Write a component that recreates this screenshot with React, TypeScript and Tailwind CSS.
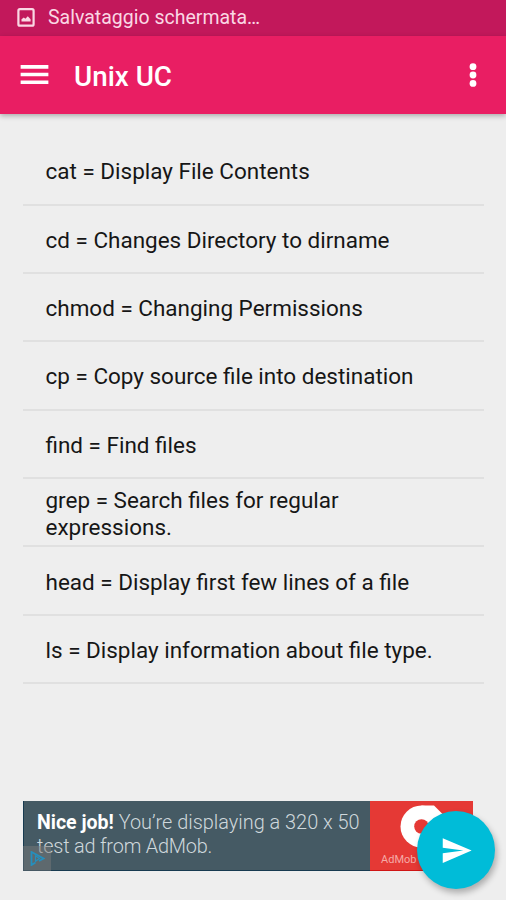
import { useState } from "react";

type Command = {
  name: string;
  description: string;
};

const commands: Command[] = [
  { name: "cat", description: "Display File Contents" },
  { name: "cd", description: "Changes Directory to dirname" },
  { name: "chmod", description: "Changing Permissions" },
  { name: "cp", description: "Copy source file into destination" },
  { name: "find", description: "Find files" },
  { name: "grep", description: "Search files for regular expressions." },
  { name: "head", description: "Display first few lines of a file" },
  { name: "ls", description: "Display information about file type." },
];

function StatusBar() {
  return (
    <div className="flex h-[35.5px] shrink-0 items-start bg-[#c2185b] pl-[17px] text-[#fad7e4]">
      <svg aria-hidden="true" className="mt-2 h-[19px] w-[18px]" viewBox="0 0 18 19">
        <rect fill="none" height="16.5" rx="1.5" stroke="currentColor" strokeWidth="2.2" width="15.2" x="1.4" y="1.2" />
        <path d="M4.5 13.5v-2.3l2.3-1.7 1.6 1.2 2.4-2.4 2.8 3v2.2z" fill="currentColor" />
      </svg>
      <span className="ml-[13px] mt-[5.5px] text-[19.5px] leading-6">Salvataggio schermata…</span>
    </div>
  );
}

function Toolbar() {
  return (
    <header className="z-10 flex h-[78.5px] shrink-0 items-center bg-[#e91e63] text-white shadow-[0_2px_5px_rgba(0,0,0,0.28)]">
      <button aria-label="Open menu" className="ml-4 size-[37px]" type="button">
        <svg className="size-[37px]" fill="currentColor" viewBox="0 0 24 24">
          <path d="M3 18.2h18v-2.3H3v2.3zm0-5h18v-2.3H3v2.3zm0-7.3v2.3h18V5.9H3z" />
        </svg>
      </button>
      <h1 className="ml-[21px] mt-[4px] text-[27.8px] font-medium leading-8">Unix UC</h1>
      <button aria-label="More options" className="ml-auto mr-[23px] h-[26px] w-5" type="button">
        <svg className="h-[26px] w-5" fill="currentColor" viewBox="0 0 20 26">
          <circle cx="10" cy="4.7" r="3.4" />
          <circle cx="10" cy="13" r="3.4" />
          <circle cx="10" cy="21.4" r="3.4" />
        </svg>
      </button>
    </header>
  );
}

function AdBanner() {
  return (
    <aside className="relative flex h-[70px] w-[450px] bg-[#455a64]">
      <p className="w-[347px] whitespace-nowrap border-b border-l border-[#173a50] pl-[13px] pt-[10.5px] text-[19.9px] font-light leading-[24px] text-[#cfd8dc]">
        <b className="text-[19.5px] font-bold text-white">Nice job!</b> You’re displaying a 320 x 50
        <br />
        <span className="tracking-[-0.2px]">test ad from AdMob.</span>
      </p>
      <div className="flex flex-1 flex-col overflow-hidden border-b border-[#cf1515] bg-[#e53935] pl-[11px]">
        <svg aria-hidden="true" className="ml-[19px] mt-1 h-[43px] w-[46px] shrink-0" viewBox="0 0 46 43">
          <path d="M21.5.5H34l12 12V27H21.5z" fill="#fff" />
          <circle cx="21.5" cy="21.5" fill="#fff" r="21" />
          <circle cx="21.5" cy="21.5" fill="#e53935" r="7.3" />
        </svg>
        <span className="mt-[5px] whitespace-nowrap text-[11px] leading-[14px] text-[#f5aaa7]">AdMob by Google</span>
      </div>
      <span className="absolute bottom-0 left-0 flex h-[25px] w-7 items-center justify-center bg-[#777]/50">
        <svg aria-hidden="true" className="h-[15px] w-[15px]" viewBox="0 0 15 15">
          <path d="M5.5 11.5 1.5 14V1l12 6.5L9 10" fill="none" stroke="#258fbd" strokeWidth="1.8" />
          <path d="m5.5 4.7 4 2.8-4 2.8z" fill="none" stroke="#258fbd" strokeWidth="1.2" />
        </svg>
      </span>
    </aside>
  );
}

export default function App() {
  const [selected, setSelected] = useState<string | null>(null);

  return (
    <main className="relative flex h-[900px] w-[506px] flex-col overflow-hidden bg-[#eee] font-['Roboto',sans-serif]">
      <StatusBar />
      <Toolbar />

      <ul className="mx-[23px] mt-[23.2px] w-[461px]">
        {commands.map((command) => (
          <li className="h-[68.35px] border-b-2 border-[#e0e0e0]" key={command.name}>
            <button
              aria-pressed={selected === command.name}
              className="flex h-full w-full items-center pl-[22.5px] pr-10 pt-[3.2px] text-left text-[22.48px] leading-[27px] text-[#161616]"
              onClick={() => setSelected(command.name)}
              type="button"
            >
              {command.name} = {command.description}
            </button>
          </li>
        ))}
      </ul>

      <div className="mb-[29.5px] ml-[23px] mt-auto">
        <AdBanner />
      </div>

      <button
        aria-label="Send"
        className="absolute bottom-[11px] right-[11px] flex size-[78px] items-center justify-center rounded-full bg-[#00bcd8] text-white shadow-[2px_4px_6px_rgba(0,0,0,0.28)]"
        type="button"
      >
        <svg className="size-[33px]" fill="currentColor" viewBox="0 0 24 24">
          <path d="M2.01 21 23 12 2.01 3 2 10l15 2-15 2z" />
        </svg>
      </button>
    </main>
  );
}
